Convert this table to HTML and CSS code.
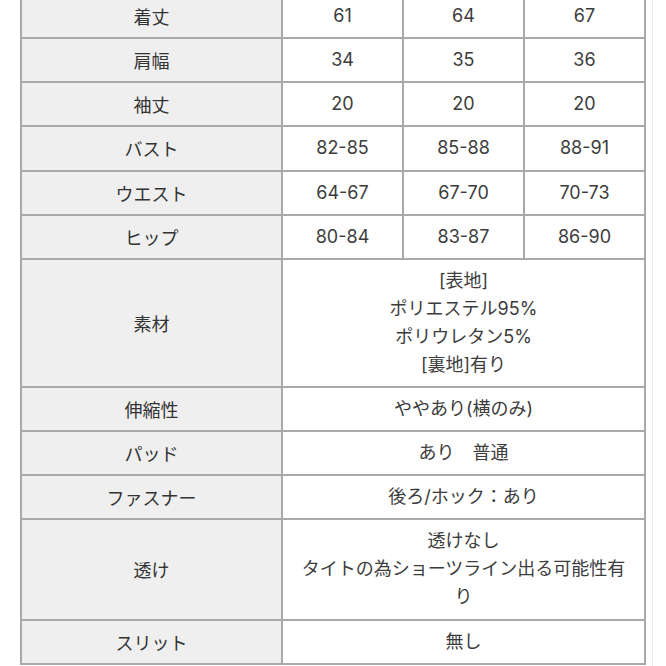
FILE: index.html
```html
<!DOCTYPE html>
<html lang="ja">
<head>
<meta charset="utf-8">
<link rel="stylesheet" href="styles.css">
</head>
<body>
<div class="page">
<table class="spec">
<colgroup><col class="c-head"><col class="c-size"><col class="c-size"><col class="c-size"></colgroup>
<tr><th>着丈</th><td>61</td><td>64</td><td>67</td></tr>
<tr><th>肩幅</th><td>34</td><td>35</td><td>36</td></tr>
<tr><th>袖丈</th><td>20</td><td>20</td><td>20</td></tr>
<tr><th>バスト</th><td>82-85</td><td>85-88</td><td>88-91</td></tr>
<tr><th>ウエスト</th><td>64-67</td><td>67-70</td><td>70-73</td></tr>
<tr><th>ヒップ</th><td>80-84</td><td>83-87</td><td>86-90</td></tr>
<tr><th>素材</th><td colspan="3">[表地]<br>ポリエステル95%<br>ポリウレタン5%<br>[裏地]有り</td></tr>
<tr><th>伸縮性</th><td colspan="3">ややあり(横のみ)</td></tr>
<tr><th>パッド</th><td colspan="3">あり　普通</td></tr>
<tr><th>ファスナー</th><td colspan="3">後ろ/ホック：あり</td></tr>
<tr><th>透け</th><td colspan="3">透けなし<br>タイトの為ショーツライン出る可能性有り</td></tr>
<tr><th>スリット</th><td colspan="3">無し</td></tr>
</table>
</div>
</body>
</html>
```
FILE: styles.css
```css
html, body {
  margin: 0;
  padding: 0;
  background: #ffffff;
}
body {
  font-family: "Inter", "Noto Sans CJK JP", sans-serif;
  color: #333333;
}
.page {
  width: 653px;
  height: 666px;
  box-sizing: border-box;
  border-right: 1px solid #ececec;
  overflow: hidden;
}
.spec {
  border-collapse: collapse;
  margin: -7px 0 0 20px;
  width: 625px;
  table-layout: fixed;
}
.c-head { width: 261px; }
.c-size { width: 121px; }
.spec th, .spec td {
  border: 2px solid #a9a9a9;
  padding: 7px 12px 7.15px;
  font-size: 18px;
  line-height: 28px;
  font-weight: 400;
  text-align: center;
  vertical-align: middle;
}
.spec th {
  background: #efefef;
  font-family: "Noto Sans CJK JP", sans-serif;
  color: #333333;
}
.spec td {
  background: #ffffff;
  color: #3c3c3c;
}
```
